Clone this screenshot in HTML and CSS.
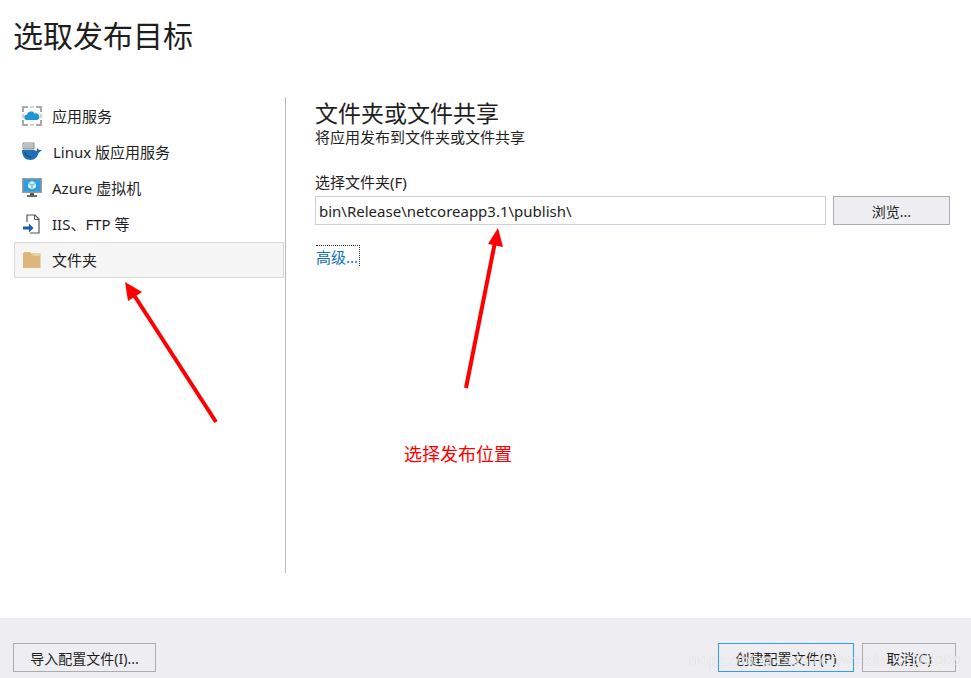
FILE: index.html
```html
<!DOCTYPE html>
<html lang="zh-CN">
<head>
<meta charset="utf-8">
<title>选取发布目标</title>
<link rel="stylesheet" href="styles.css">
</head>
<body>
<div class="page">
  <header class="header"><h1 class="title">选取发布目标</h1></header>
  <main class="main">
    <nav class="sidebar">
      <div class="item">
        <svg class="icon" viewBox="0 0 20 20"><path d="M1 6V1h5M14 1h5v5M19 14v5h-5M6 19H1v-5" fill="none" stroke="#a9a9a9" stroke-width="2"/><path d="M8 1h4M8 19h4M1 8v4M19 8v4" stroke="#c4c4c4" stroke-width="1.5"/><path d="M5 14a2.7 2.7 0 0 1 0-5.4 4 4 0 0 1 7.5-1 3.3 3.3 0 0 1 2.6 6.4z" fill="#1e96dc"/></svg>
        <span class="label">应用服务</span>
      </div>
      <div class="item item-linux">
        <svg class="icon" viewBox="0 0 20 20"><path d="M1 1h11v6H1z" fill="#f4f4f4" stroke="#8a8a8a"/><path d="M3 2v5M5 2v5M7 2v5M9 2v5M11 2v5" stroke="#8a8a8a"/><path d="M0 8h12c1 0 1.500 1 2.500 1l1-3 1.500 2h3l-3.500 3c-1 4-3.500 7-8 7-5 0-8.500-3-8.500-10z" fill="#1f6fb5"/><path d="M3 10c.5 3 2.500 5 6 5" stroke="#0e3f6e" stroke-width="1" fill="none"/></svg>
        <span class="label">Linux 版应用服务</span>
      </div>
      <div class="item">
        <svg class="icon" viewBox="0 0 20 20"><rect x="0" y="0" width="20" height="15" fill="#9a9a9a"/><rect x="1.500" y="1.500" width="17" height="12" fill="#2b9fe0"/><path d="M10 3l4 2v4.500l-4 2-4-2V5z" fill="#d8f0fb"/><path d="M6 5l4 2 4-2M10 7v4.500" stroke="#2b9fe0" stroke-width=".8" fill="none"/><path d="M8 15h4v2H8z" fill="#555"/><path d="M5 17h10v2H5z" fill="#666"/></svg>
        <span class="label">Azure 虚拟机</span>
      </div>
      <div class="item">
        <svg class="icon" viewBox="0 0 20 20"><path d="M5 8V1h8l4 4v14H8" fill="#fff" stroke="#555" stroke-width="1.200"/><path d="M12.500 1v4.500H17" fill="none" stroke="#555"/><path d="M1 12.500h6V9.500l4.500 4.500L7 18.500v-3H1z" fill="#1a5fa8"/></svg>
        <span class="label">IIS、FTP 等</span>
      </div>
      <div class="item item-selected">
        <svg class="icon" viewBox="0 0 20 20"><path d="M1 3.500L2 2h6l1.500 1.500H18.500V18H1z" fill="#dcb67a"/><path d="M9.500 3.500h9V6H11z" fill="#e9cd9c"/></svg>
        <span class="label">文件夹</span>
      </div>
    </nav>
    <section class="panel">
      <h2 class="panel-title">文件夹或文件共享</h2>
      <p class="panel-sub">将应用发布到文件夹或文件共享</p>
      <label class="field-label" for="folder">选择文件夹(F)</label>
      <div class="field-row">
        <input class="input" id="folder" type="text" value="bin\Release\netcoreapp3.1\publish\">
        <button class="btn btn-browse">浏览...</button>
      </div>
      <a class="advanced">高级...</a>
    </section>
  </main>
  <footer class="footer">
    <button class="btn btn-import">导入配置文件(I)...</button>
    <div class="footer-right">
      <button class="btn btn-create">创建配置文件(P)</button>
      <button class="btn btn-cancel">取消(C)</button>
    </div>
  </footer>
  <svg class="arrows" viewBox="0 0 971 678" width="971" height="678">
    <path d="M216 422L132 292" stroke="#f00" stroke-width="4" fill="none"/>
    <path d="M125 282L142 292 128 301z" fill="#f00"/>
    <path d="M466 388L495 242" stroke="#f00" stroke-width="4" fill="none"/>
    <path d="M498 228L503 247 488 244z" fill="#f00"/>
  </svg>
  <div class="annotation">选择发布位置</div>
  <div class="watermark">https://blog.csdn.net/weixin_43303309</div>
</div>
</body>
</html>
```
FILE: styles.css
```css
* { box-sizing: border-box; }
html, body { margin: 0; padding: 0; }
body {
  width: 971px;
  height: 678px;
  overflow: hidden;
  background: #fff;
  color: #1e1e1e;
  font-family: "Noto Sans", "Noto Sans CJK SC", sans-serif;
  font-size: 15px;
}
.page { position: relative; width: 971px; height: 678px; display: flex; flex-direction: column; }
.header { height: 97px; padding: 12px 0 0 13px; flex: none; }
.title { margin: 0; font-size: 30px; font-weight: 400; line-height: 44px; font-family: "Noto Sans CJK SC", sans-serif; }
.main { height: 521px; flex: none; display: flex; align-items: flex-start; }
.sidebar { width: 286px; height: 476px; margin-left: 0; padding: 1px 1px 0 14px; border-right: 1px solid #b9b9b9; flex: none; }
.item { height: 36px; display: flex; align-items: center; padding-left: 7px; border: 1px solid transparent; }
.item-selected { background: #f5f5f5; border-color: #dadada; }
.icon { width: 20px; height: 20px; flex: none; overflow: visible; }
.label { margin-left: 10px; line-height: 22px; white-space: nowrap; }
.item-linux .label { margin-left: 11px; }
.panel { flex: 1; padding: 0 21px 0 29px; }
.panel-title { margin: 0; font-size: 23px; font-weight: 400; line-height: 30px; font-family: "Noto Sans CJK SC", sans-serif; }
.panel-sub { margin: 0; line-height: 20px; }
.field-label { display: block; margin-top: 25px; line-height: 20px; }
.field-row { display: flex; gap: 7px; margin-top: 4px; }
.input { width: 511px; height: 29px; padding: 0 3px; border: 1px solid #ccc; border-color: #cccedb; font: inherit; color: #1e1e1e; background: #fff; outline: none; }
.btn { height: 29px; padding: 0; border: 1px solid #acacac; background: #eeeef2; font: inherit; font-size: 14px; color: #1e1e1e; }
.btn-browse { width: 117px; }
.advanced { display: inline-block; margin: 20px 0 0 1px; padding-right: 1px; height: 21px; line-height: 23px; color: #0e70c0; border-top: 1px dotted #333; border-right: 1px dotted #333; }
.footer { height: 60px; flex: none; background: #eeeef2; padding: 25px 15px 0 13px; display: flex; justify-content: space-between; align-items: flex-start; }
.footer-right { display: flex; gap: 8px; }
.btn-import { width: 143px; }
.btn-create { width: 136px; border-color: #3399ff; }
.btn-cancel { width: 94px; }
.arrows { position: absolute; left: 0; top: 0; pointer-events: none; }
.annotation { position: absolute; left: 404px; top: 440px; font-family: "Noto Sans CJK SC", sans-serif; font-size: 18px; line-height: 26px; color: #f00; }
.watermark { position: absolute; left: 689px; top: 648px; font-size: 15px; line-height: 22px; color: rgba(255,255,255,.75); text-shadow: 0 0 1px rgba(150,150,150,.45); white-space: nowrap; }
```
